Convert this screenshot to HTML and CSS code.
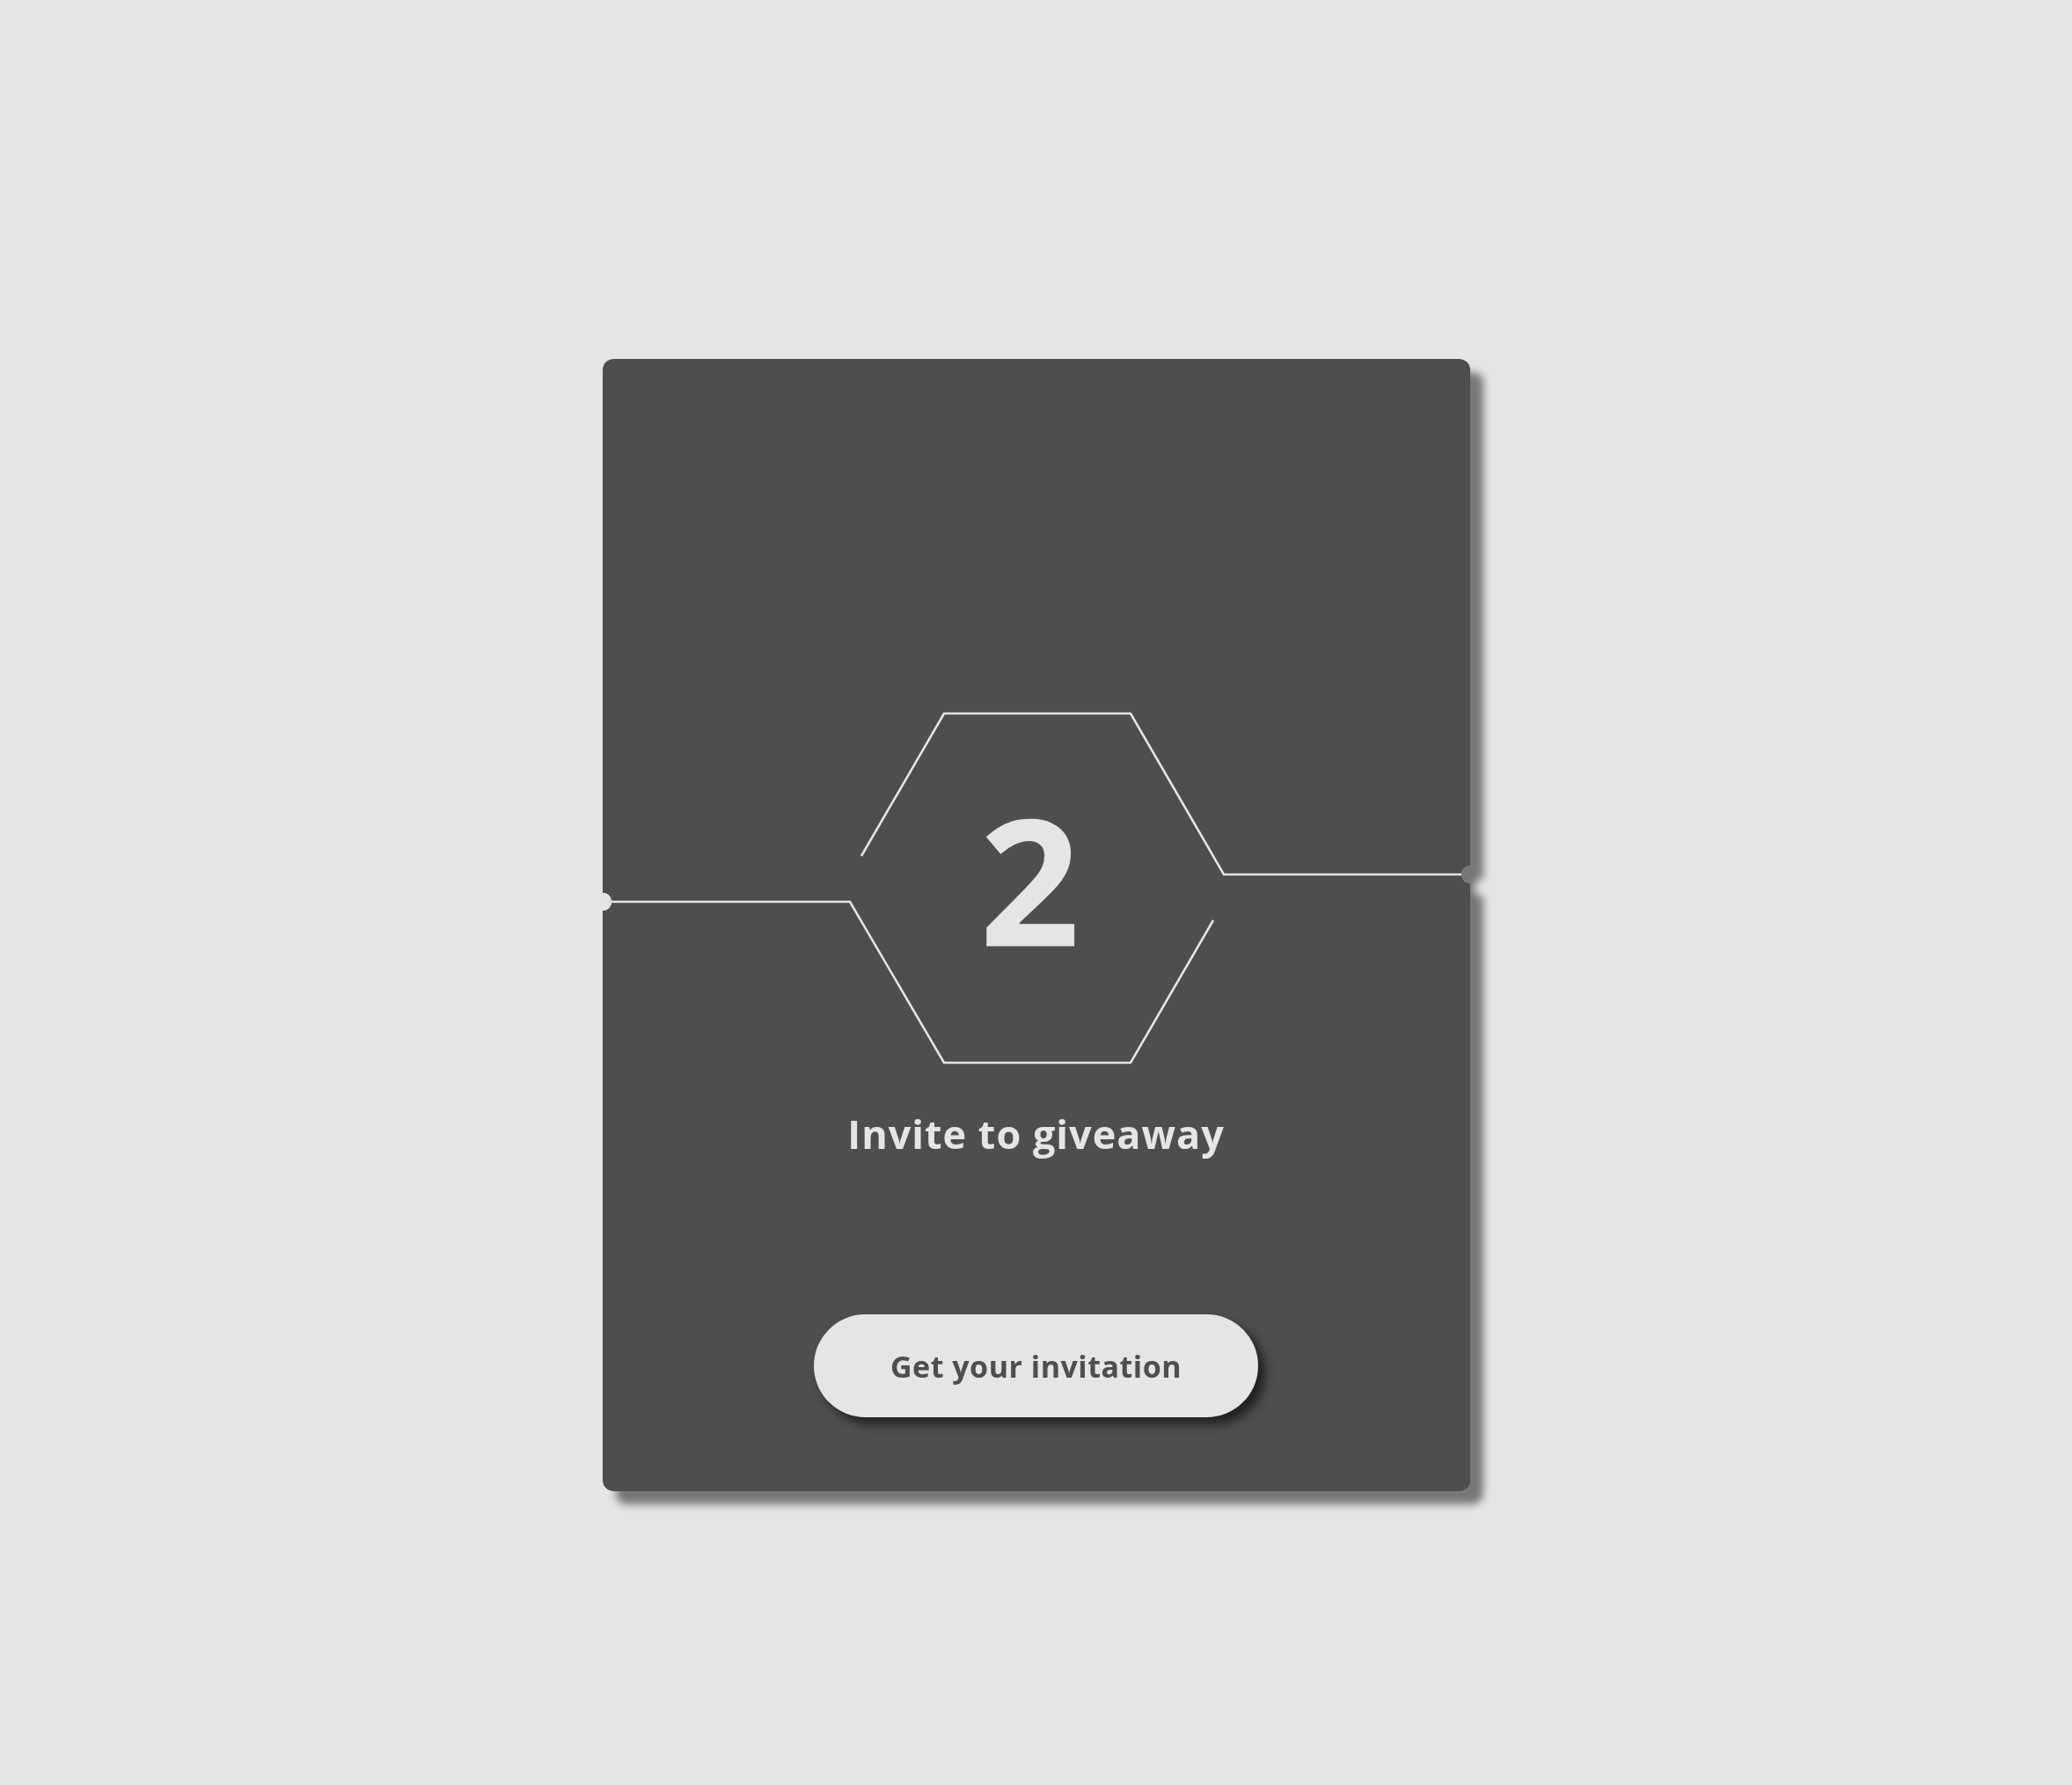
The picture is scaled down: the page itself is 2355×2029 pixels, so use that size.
FILE: index.html
```html
<!DOCTYPE html>
<html lang="en">
<head>
    <meta charset="UTF-8">
    <meta name="viewport" content="width=device-width, initial-scale=1.0">
    <title>Invite to giveaway</title>
    <link rel="stylesheet" href="styles.css">
</head>
<body>

    <!-- Ticket card, split in two halves by the hexagon line -->
    <div class="ticket">
        <div class="card">
            <svg class="cut-line" viewBox="0 0 986 1287" width="986" height="1287">
                <polyline points="986,586 706,586 600,403 388,403 294,565" />
                <polyline points="0,617 281,617 388,800 600,800 694,638" />
            </svg>

            <div class="hex">
                <span class="step">2</span>
            </div>
            <h2 class="title">Invite to giveaway</h2>
            <button class="invite-button">Get your invitation</button>
        </div>
    </div>

</body>
</html>
```

FILE: styles.css
```css
body {
    margin: 0;
    background: #e5e5e5;
    font-family: "Open Sans", "Liberation Sans", sans-serif;
    min-height: 100vh;
    display: flex;
    justify-content: center;
    align-items: flex-start;
    padding-top: 408px;
    box-sizing: border-box;
}
.ticket {
    filter: drop-shadow(15px 15px 5px rgba(0, 0, 0, 0.48));
}
.card {
    position: relative;
    width: 986px;
    height: 1287px;
    background: #4e4e4e;
    border-radius: 12px;
    display: flex;
    flex-direction: column;
    align-items: center;
    padding-top: 403px;
    box-sizing: border-box;
    /* round notches where the line meets the edges */
    -webkit-mask-image: radial-gradient(circle at 0 617px, transparent 10px, #000 10.5px),
                        radial-gradient(circle at 100% 586px, transparent 10px, #000 10.5px);
    -webkit-mask-size: 50% 100%;
    -webkit-mask-position: left top, right top;
    -webkit-mask-repeat: no-repeat;
    mask-image: radial-gradient(circle at 0 617px, transparent 10px, #000 10.5px),
                radial-gradient(circle at 100% 586px, transparent 10px, #000 10.5px);
    mask-size: 50% 100%;
    mask-position: left top, right top;
    mask-repeat: no-repeat;
}
.cut-line {
    position: absolute;
    left: 0;
    top: 0;
    fill: none;
    stroke: #e6e6e6;
    stroke-width: 2.5;
}
.hex {
    height: 397px;
    width: 212px;
    display: flex;
    justify-content: center;
    align-items: center;
}
.step {
    font-size: 200px;
    font-weight: 700;
    line-height: 1;
    color: #e5e5e5;
    margin-top: -24px;
    margin-left: -14px;
}
.title {
    margin: 50px 0 0;
    font-size: 45px;
    font-weight: 700;
    line-height: 62px;
    letter-spacing: 1px;
    color: #e5e5e5;
}
.invite-button {
    margin-top: 174px;
    width: 505px;
    height: 117px;
    border: none;
    border-radius: 59px;
    background: #e5e5e5;
    color: #4e4e4e;
    font-family: inherit;
    font-size: 34px;
    font-weight: 700;
    letter-spacing: 0.5px;
    box-shadow: 8px 8px 12px rgba(0, 0, 0, 0.6);
    cursor: pointer;
}
```
